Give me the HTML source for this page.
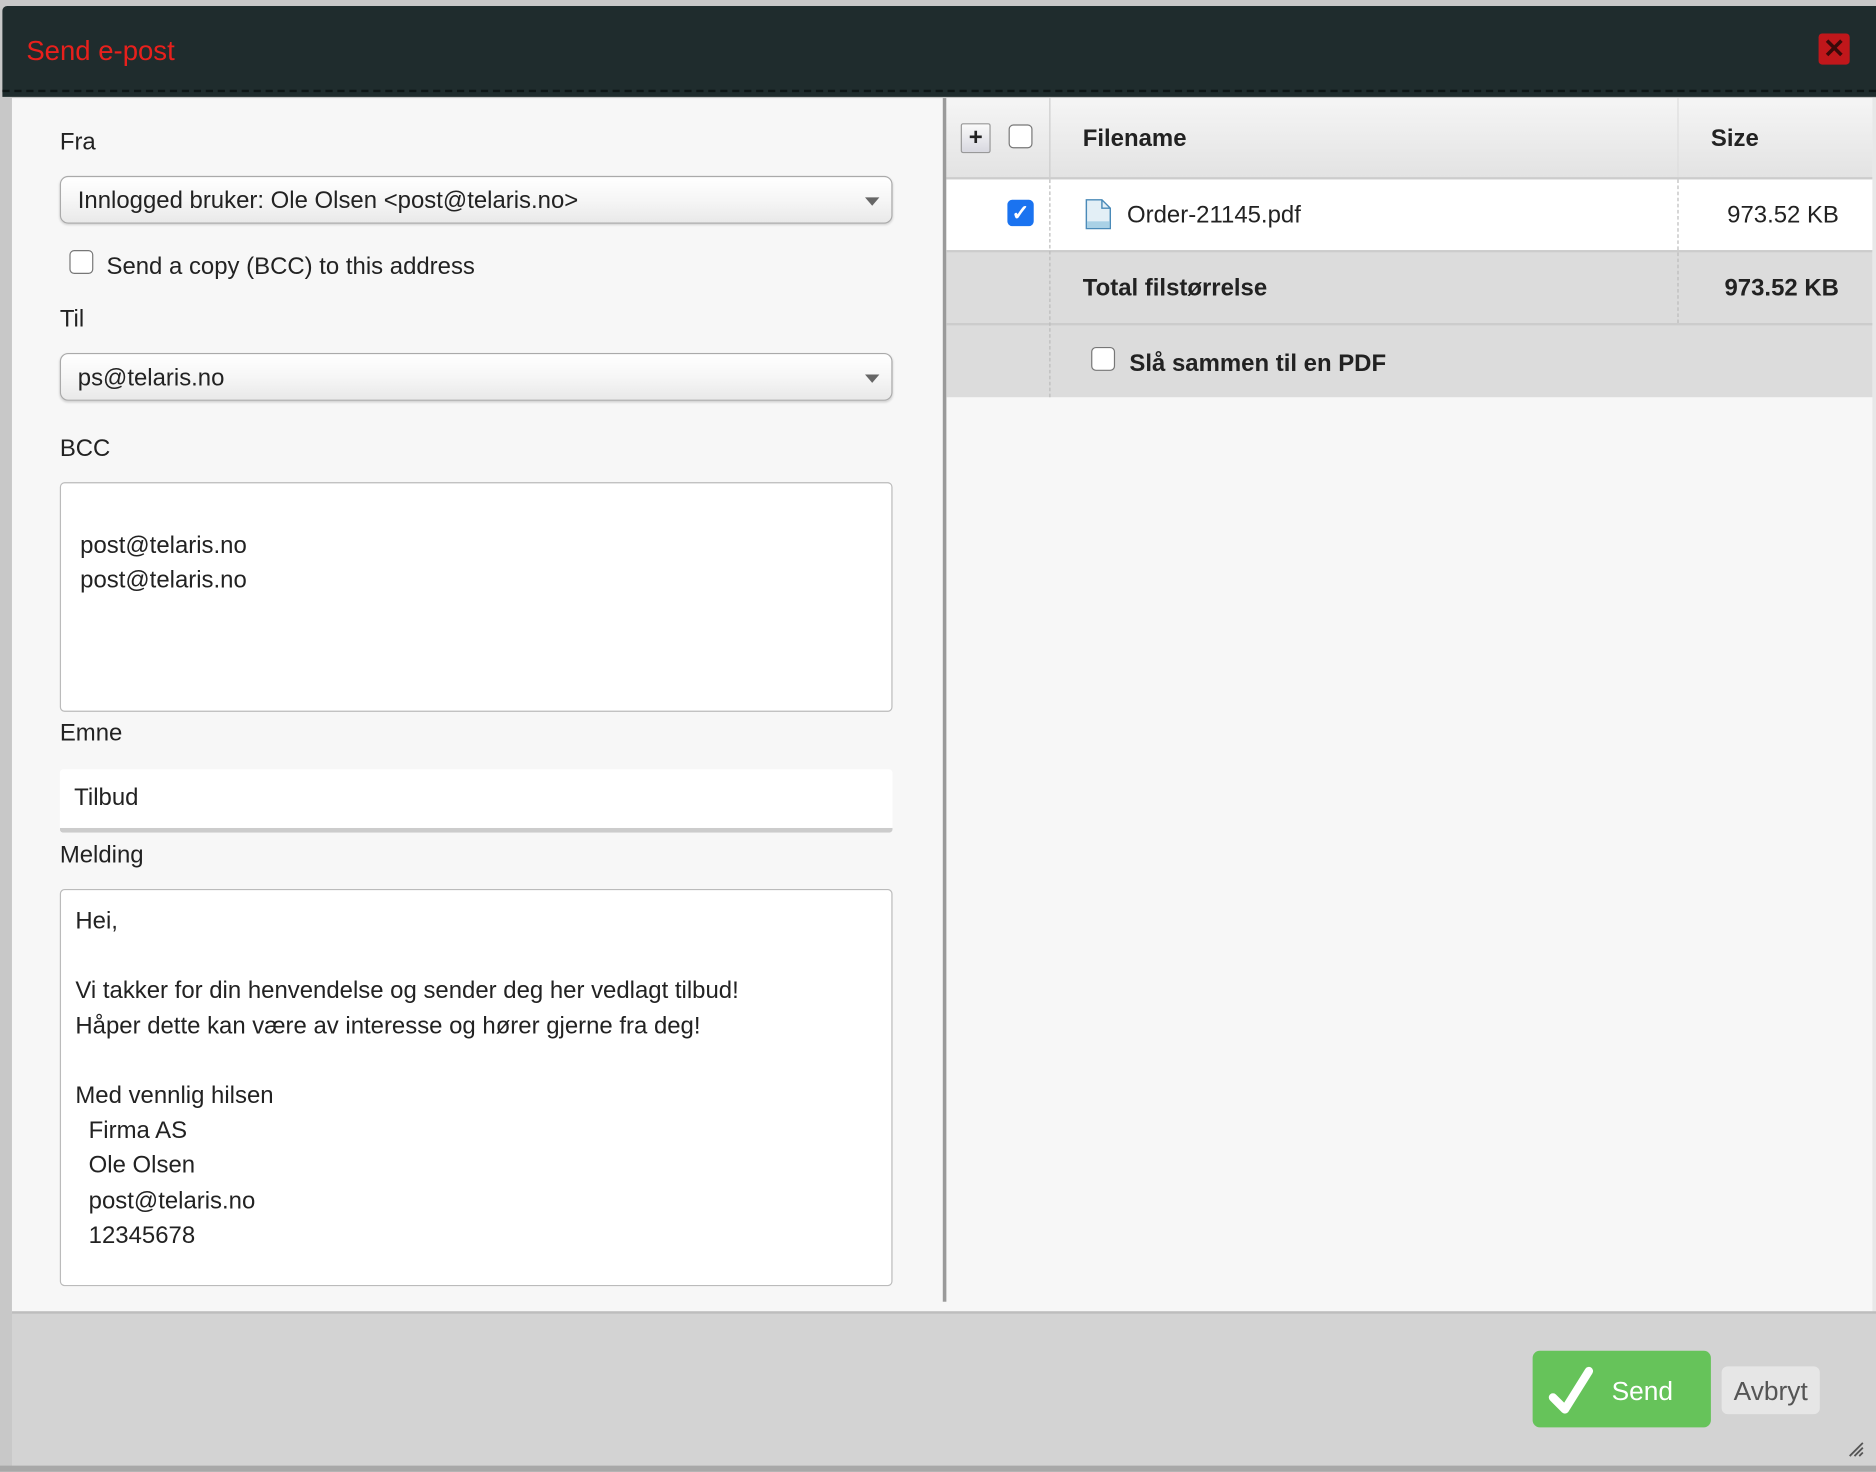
<!DOCTYPE html>
<html><head><meta charset="utf-8"><style>
html,body{margin:0;padding:0;width:1876px;height:1472px;overflow:hidden;background:#c8c8c8;}
#s{position:absolute;left:0;top:0;width:1568px;height:1230px;transform:scale(1.19643);transform-origin:0 0;font-family:"Liberation Sans",sans-serif;color:#222;}
.a{position:absolute;}
.lbl{font-size:20px;color:#222;}
.sel{position:absolute;left:50px;width:680px;height:38px;border:1px solid #aaa;border-radius:7px;background:linear-gradient(#fff,#f6f6f6 50%,#e9e9e9);box-shadow:0 1px 2px rgba(0,0,0,.15);font-size:20px;line-height:40px;padding-left:14px;box-sizing:content-box;}
.sel:after{content:"";position:absolute;right:10px;top:17px;border-left:6px solid transparent;border-right:6px solid transparent;border-top:7px solid #666;}
.cb{position:absolute;width:18px;height:18px;border:1.5px solid #777;border-radius:4px;background:#fff;}
.ta{position:absolute;left:50px;width:694px;background:#fff;border:1px solid #bbb;border-radius:4px;font-size:20px;}
.b{font-weight:bold;font-size:20px;}
</style></head><body><div id="s">
<div class="a" style="left:2px;top:5px;width:1566px;height:76px;background:#1f2c2d;border-radius:4px 0 0 0;"></div>
<div class="a" style="left:2px;top:75px;width:1566px;height:0;border-top:2px dashed #0e1616;"></div>
<div class="a" style="left:22px;top:29px;font-size:23px;color:#e8201c;">Send e-post</div>
<div class="a" style="left:1520px;top:28px;width:26px;height:26px;background:#c0171b;border-radius:3px;color:#3a0a0a;font-size:22px;line-height:26px;text-align:center;font-weight:bold;">✕</div>
<div class="a" style="left:10px;top:82px;width:1558px;height:1015px;background:#f7f7f7;"></div>
<div class="a" style="left:788px;top:82px;width:3px;height:1006px;background:#9a9a9a;"></div>
<div class="a lbl" style="left:50px;top:108px;">Fra</div>
<div class="sel" style="top:147px;">Innlogged bruker: Ole Olsen &lt;post@telaris.no&gt;</div>
<div class="cb" style="left:58px;top:209px;"></div>
<div class="a lbl" style="left:89px;top:212px;">Send a copy (BCC) to this address</div>
<div class="a lbl" style="left:50px;top:256px;">Til</div>
<div class="sel" style="top:295px;">ps@telaris.no</div>
<div class="a lbl" style="left:50px;top:364px;">BCC</div>
<div class="ta" style="top:403px;height:190px;"><div style="position:absolute;left:16px;top:38px;line-height:29px;">post@telaris.no<br>post@telaris.no</div></div>
<div class="a lbl" style="left:50px;top:602px;">Emne</div>
<div class="a" style="left:50px;top:643px;width:696px;height:49px;background:#fff;border-bottom:4px solid #ccc;border-radius:3px;font-size:20px;line-height:48px;"><span style="padding-left:12px;">Tilbud</span></div>
<div class="a lbl" style="left:50px;top:704px;">Melding</div>
<div class="ta" style="top:743px;height:330px;"><div style="position:absolute;left:12px;top:12px;line-height:29.2px;white-space:pre;">Hei,

Vi takker for din henvendelse og sender deg her vedlagt tilbud!
Håper dette kan være av interesse og hører gjerne fra deg!

Med vennlig hilsen
  Firma AS
  Ole Olsen
  post@telaris.no
  12345678</div></div>
<div class="a" style="left:791px;top:82px;width:774px;height:66px;background:linear-gradient(#f5f5f5,#e3e3e3);border-bottom:2px solid #ccc;"></div>
<div class="a" style="left:877px;top:82px;width:1px;height:66px;background:#ccc;"></div>
<div class="a" style="left:1402px;top:82px;width:1px;height:66px;background:#ddd;"></div>
<div class="a" style="left:803px;top:103px;width:23px;height:23px;border:1px solid #999;border-radius:2px;background:linear-gradient(#fafafa,#d8d8e0);font-weight:bold;font-size:20px;line-height:22px;text-align:center;color:#222;">+</div>
<div class="cb" style="left:843px;top:104px;"></div>
<div class="a b" style="left:905px;top:105px;">Filename</div>
<div class="a b" style="left:1430px;top:105px;">Size</div>
<div class="a" style="left:791px;top:150px;width:774px;height:59px;background:#fff;border-bottom:2px solid #ccc;"></div>
<div class="a" style="left:842px;top:167px;width:22px;height:22px;background:#1a73f0;border-radius:4px;color:#fff;font-size:18px;line-height:22px;text-align:center;font-weight:bold;">✓</div>
<svg class="a" style="left:907px;top:166px;" width="22" height="26" viewBox="0 0 22 26"><path d="M1 1H14L21 8V25H1Z" fill="#e3eff6" stroke="#4a8ab8" stroke-width="1.2"/><path d="M14 1V8H21" fill="none" stroke="#4a8ab8" stroke-width="1.2"/><rect x="1.5" y="19" width="19" height="5.5" fill="#a9d1e6"/></svg>
<div class="a" style="left:942px;top:169px;font-size:20px;">Order-21145.pdf</div>
<div class="a" style="left:1380px;width:157px;text-align:right;top:169px;font-size:20px;">973.52 KB</div>
<div class="a" style="left:791px;top:211px;width:774px;height:59px;background:#dcdcdc;border-bottom:2px solid #ccc;"></div>
<div class="a b" style="left:905px;top:230px;">Total filstørrelse</div>
<div class="a b" style="left:1380px;width:157px;text-align:right;top:230px;">973.52 KB</div>
<div class="a" style="left:791px;top:272px;width:774px;height:60px;background:#dcdcdc;"></div>
<div class="a" style="left:877px;top:150px;height:182px;border-left:1px dashed #bbb;"></div>
<div class="a" style="left:1402px;top:150px;height:120px;border-left:1px dashed #bbb;"></div>
<div class="cb" style="left:912px;top:290px;"></div>
<div class="a b" style="left:944px;top:293px;">Slå sammen til en PDF</div>
<div class="a" style="left:1565px;top:82px;width:3px;height:1015px;background:#e8e8e8;"></div>
<div class="a" style="left:10px;top:1096px;width:1558px;height:129px;background:#d3d3d3;border-top:2px solid #bdbdbd;"></div>
<div class="a" style="left:0;top:1225px;width:1568px;height:5px;background:#a8a8a8;"></div>
<div class="a" style="left:1281px;top:1129px;width:149px;height:64px;background:#66c35a;border-radius:6px;"></div>
<svg class="a" style="left:1292px;top:1138px;" width="46" height="46" viewBox="0 0 46 46"><path d="M6 30L16 40L36 8" fill="none" stroke="#fff" stroke-width="7" stroke-linecap="round" stroke-linejoin="round"/></svg>
<div class="a" style="left:1347px;top:1150px;font-size:22px;color:#fff;">Send</div>
<div class="a" style="left:1439px;top:1142px;width:82px;height:40px;background:#e6e6e6;border-radius:5px;font-size:22px;color:#555;line-height:42px;text-align:center;">Avbryt</div>
<svg class="a" style="left:1544px;top:1204px;" width="14" height="14"><path d="M2 13L13 2M6 13L13 6M10 13L13 10" stroke="#555" stroke-width="1.5"/></svg>
</div></body></html>
